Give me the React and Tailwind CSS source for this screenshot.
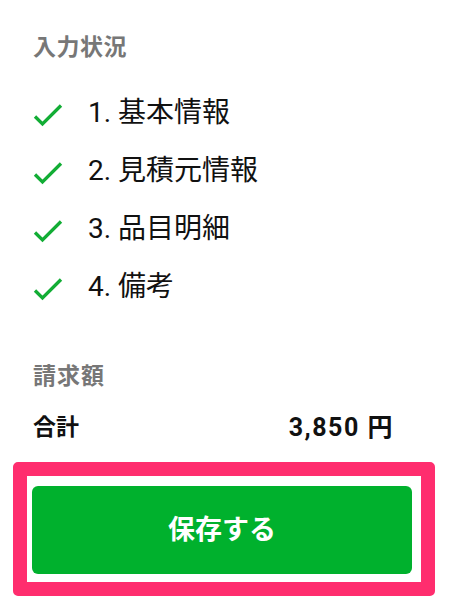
const steps = ['1. 基本情報', '2. 見積元情報', '3. 品目明細', '4. 備考']

function Check() {
  return (
    <svg viewBox="0 0 36 36" className="-ml-[4px] h-9 w-9 shrink-0">
      <polyline points="6,21.5 13.5,29 32,10.5" fill="none" stroke="#12ad35" strokeWidth="3.3" />
    </svg>
  )
}

export default function App() {
  return (
    <div className="min-h-[614px] bg-white font-['Roboto','Noto_Sans_CJK_JP',sans-serif] text-[#111]">
      <div className="px-[33px] pt-[33px]">
        <h2 className="flex h-[30px] items-center text-[23px] font-bold tracking-[0.5px] text-[#777]">入力状況</h2>

        <ul className="mt-[21px]">
          {steps.map((s) => (
            <li key={s} className="flex h-[58px] items-center">
              <Check />
              <span className="ml-[23px] text-[28px]">{s}</span>
            </li>
          ))}
        </ul>

        <div className="mt-[46px] flex h-[30px] items-center text-[23px] font-bold tracking-[1px] text-[#777]">請求額</div>
        <div className="mt-[16px] flex h-[40px] items-center justify-between pr-[23px] font-bold">
          <span className="text-[23px]">合計</span>
          <span className="text-[25px] tracking-[1.5px]">3,850 円</span>
        </div>

        <div className="-ml-[20px] mt-[14px] w-[422px] rounded-[5px] border-[14px] border-[#ff2d6e] pb-[8px] pl-[5px] pr-[9px] pt-[10px]">
          <button className="flex h-[88px] w-[380px] items-center justify-center rounded-[6px] bg-[#00b12d] text-[27px] font-bold text-white">
            保存する
          </button>
        </div>
      </div>
    </div>
  )
}
